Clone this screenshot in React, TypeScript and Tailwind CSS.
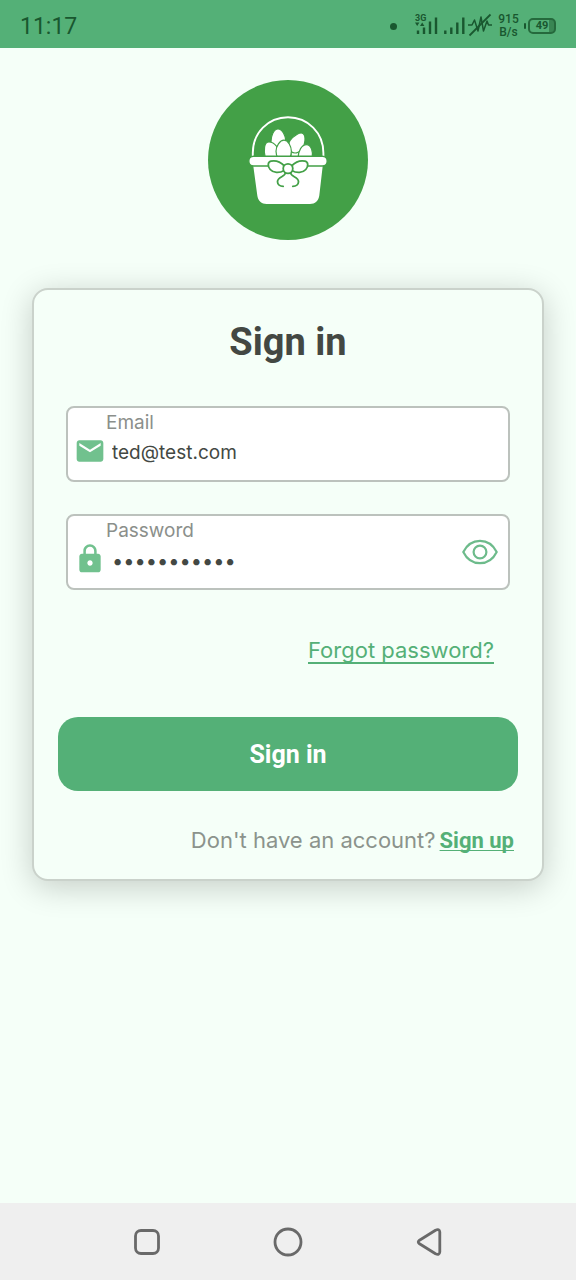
import { useState } from "react";

function StatusBar() {
  return (
    <header className="flex h-12 items-center justify-between bg-[#54b077] px-5 pt-1 font-['Roboto',sans-serif] text-[#19572f]">
      <span className="pt-0.5 text-[23px] leading-7">11:17</span>
      <div className="flex items-center">
        <span className="mr-[18px] size-[7px] rounded-full bg-[#19572f]" />
        <svg width="78" height="28" viewBox="0 0 78 28" fill="none" stroke="currentColor" aria-hidden="true">
          <text x="0" y="8.500" fontSize="9" fontWeight="700" fill="currentColor" stroke="none">3G</text>
          <path fill="currentColor" stroke="none" d="M0 10.500h4.400l-2.200 3.500zM5 14l2.200-3.500L9.400 14z" />
          <path strokeWidth="2.400" d="M3 18.500v3.500M9 15.500V22M15 9.500V22M21 5.500V22" />
          <path strokeWidth="2.400" d="M30.300 18.500V22M36.300 15.500V22M42.300 10.500V22M48.300 5.500V22" />
          <path strokeWidth="1.500" strokeLinejoin="round" d="M53 13h4l2.500-5L63 19l3-14 2.500 14L72 9l1.500 4H77" />
          <path strokeWidth="1.800" d="M54.500 23.500L75.500 2.500" />
        </svg>
        <span className="ml-1 w-[23px] text-center text-xs font-medium leading-[13px]">
          915 <span className="block">B/s</span>
        </span>
        <span className="ml-1 flex items-center gap-0.5">
          <span className="h-[6px] w-[2px] rounded-sm bg-[#19572f]" />
          <span className="flex h-4 w-7 items-center justify-center rounded-[5px] border-2 border-[#25693c] bg-linear-to-r from-[#54b077] from-80% to-[#398653] to-80% text-[11px] font-bold leading-3">
            49
          </span>
        </span>
      </div>
    </header>
  );
}

function BasketLogo() {
  return (
    <svg className="size-40" viewBox="0 0 160 160" role="img" aria-label="Basket">
      <circle cx="80" cy="80" r="80" fill="#43a047" />
      <path d="M44.800 77V73C44.800 53 60 37.200 80 37.200S115.400 53 115.400 73v4" fill="none" stroke="#fff" strokeWidth="1.900" />
      <g fill="#fff" stroke="#43a047" strokeWidth="1.200">
        <path d="M83 70.500h9v7h-9z" />
        <path d="M70 49c4.400 0 7.900 7 7.900 12.500 0 4.500-3 8-7.400 8s-7.500-3.500-7.500-8C63 56 65.500 49 70 49z" />
        <path d="M95 53.500c3.200 2 2.400 11.500-1.100 16-2.800 3.600-7.800 4.500-10.600 2.200s-4-7.500-1.200-11.300C85.600 55.700 92.200 51.500 95 53.500z" />
        <path d="M61 62c5.500 0 10.500 6 11.500 15.500H57.200C55.500 70 56 62 61 62z" />
        <path d="M98.500 64.600c4.800 0 6.800 7.400 5.700 12.900H90.200c0-6.500 3.500-12.900 8.300-12.900z" />
        <path d="M76 60.200c4.200 0 7.400 6.300 7.400 11.100 0 3-.8 5-2 6.700H70c-1.200-1.700-2-3.700-2-6.700 0-4.800 3.800-11.100 8-11.100z" />
      </g>
      <path d="M45.300 86h69.400l-3.400 29.500c-.6 5-4.300 8.500-9.300 8.500H58.600c-5 0-8.700-3.500-9.300-8.500z" fill="#fff" />
      <rect x="40.800" y="76.300" width="78.400" height="9.700" rx="4.800" fill="#fff" stroke="#43a047" strokeWidth="1.400" />
      <g fill="#fff" stroke="#43a047" strokeWidth="1.800" strokeLinecap="round" strokeLinejoin="round">
        <path d="M77.500 92.500c0 4.500-8 4-8 9.200 0 2.800 2.500 4.600 5.700 4.600M82.500 92.500c0 4.500 8 4 8 9.200 0 2.800-2.500 4.600-5.700 4.600" fill="none" />
        <path d="M76.500 86c-4-4-9-5.800-13.500-4.800-3.500.8-3.500 5.200-.8 8.300 3 3.500 9 4 14 1z" />
        <path d="M83.500 86c4-4 9-5.800 13.500-4.800 3.500.8 3.500 5.200.8 8.300-3 3.500-9 4-14 1z" />
        <circle cx="80" cy="88.600" r="4.800" />
      </g>
    </svg>
  );
}

export default function App() {
  const [visible, setVisible] = useState(false);
  const [email, setEmail] = useState("ted@test.com");
  const [password, setPassword] = useState("password123");

  return (
    <div className="flex min-h-screen flex-col bg-[#f5fff8] font-['Inter',sans-serif] text-[#434843]">
      <StatusBar />
      <main className="flex flex-1 flex-col items-center px-8 pb-8 pt-8">
        <BasketLogo />
        <form
          onSubmit={(event) => event.preventDefault()}
          className="mt-12 flex w-full flex-col rounded-2xl border-2 border-[#cad2cb] bg-[#f5fff8] px-6 pb-6 pt-7 shadow-[0_6px_32px_rgba(0,0,0,0.2)]"
        >
          <h1 className="text-center font-['Roboto',sans-serif] text-[38px] font-bold leading-12">Sign in</h1>

          <div className="mx-2 mt-10 flex flex-col gap-8">
            <div className="flex h-19 flex-col rounded-lg border-2 border-[#bcc2bd] bg-white px-1.5 pt-[3px]">
              <label htmlFor="email" className="ml-8 text-[19px] leading-6 text-[#8b8f8b]">
                Email
              </label>
              <div className="flex h-9 items-center gap-1.5">
                <svg className="mb-1 size-8 shrink-0" viewBox="0 0 24 24" fill="#71c18e" aria-hidden="true">
                  <path d="M20 4H4c-1.100 0-1.990.9-1.990 2L2 18c0 1.100.9 2 2 2h16c1.100 0 2-.9 2-2V6c0-1.100-.9-2-2-2zm0 4l-8 5-8-5V6l8 5 8-5v2z" />
                </svg>
                <input
                  id="email"
                  type="email"
                  value={email}
                  onChange={(event) => setEmail(event.target.value)}
                  className="min-w-0 flex-1 bg-transparent text-[19px] leading-6 outline-none"
                />
              </div>
            </div>

            <div className="flex h-19 items-center rounded-lg border-2 border-[#bcc2bd] bg-white pl-1.5 pr-2.5">
              <div className="flex h-full min-w-0 flex-1 flex-col pt-[3px]">
                <label htmlFor="password" className="ml-8 text-[19px] leading-6 text-[#8b8f8b]">
                  Password
                </label>
                <div className="flex h-9 items-center gap-1.5">
                  <svg className="mb-1 size-8 shrink-0" viewBox="0 0 24 24" fill="#71c18e" aria-hidden="true">
                    <path d="M18 8h-1V6c0-2.760-2.240-5-5-5S7 3.240 7 6v2H6c-1.100 0-2 .9-2 2v10c0 1.100.9 2 2 2h12c1.100 0 2-.9 2-2V10c0-1.100-.9-2-2-2zm-6 9c-1.100 0-2-.9-2-2s.9-2 2-2 2 .9 2 2-.9 2-2 2zm3.100-9H8.900V6c0-1.710 1.390-3.100 3.100-3.100s3.100 1.390 3.100 3.100v2z" />
                  </svg>
                  <input
                    id="password"
                    type={visible ? "text" : "password"}
                    value={password}
                    onChange={(event) => setPassword(event.target.value)}
                    className="min-w-0 flex-1 bg-transparent text-xl leading-6 outline-none"
                  />
                </div>
              </div>
              <button
                type="button"
                aria-label="Show password"
                aria-pressed={visible}
                onClick={() => setVisible(!visible)}
              >
                <svg width="36" height="26" viewBox="0 0 36 26" fill="none" stroke="#6dbb8b" strokeWidth="2.200" aria-hidden="true">
                  <path d="M1.300 13C4.500 6.500 10.500 1.800 18 1.800S31.500 6.500 34.700 13C31.500 19.500 25.500 24.200 18 24.200S4.500 19.500 1.300 13z" strokeLinejoin="round" />
                  <circle cx="18" cy="13" r="6.400" />
                </svg>
              </button>
            </div>
          </div>

          <a
            href="#forgot"
            className="mr-6 mt-[46px] self-end text-[22px] leading-7 text-[#54b077] underline decoration-2 underline-offset-4 [text-decoration-skip-ink:none]"
          >
            Forgot password?
          </a>

          <button
            type="submit"
            className="mt-[53px] h-[74px] rounded-[20px] bg-[#54b077] pt-0.5 font-['Roboto',sans-serif] text-[25px] font-bold text-white"
          >
            Sign in
          </button>

          <p className="mr-1 mt-[35px] flex items-baseline justify-end gap-1 text-[22px] leading-7 text-[#8b938c]">
            Don't have an account?
            <a
              href="#signup"
              className="font-['Roboto',sans-serif] font-bold text-[#54b077] underline decoration-1 underline-offset-2 [text-decoration-skip-ink:none]"
            >
              Sign up
            </a>
          </p>
        </form>
      </main>

      <nav aria-label="System" className="flex h-[77px] items-center justify-center gap-28 bg-[#efefef] text-[#696969]">
        <button type="button" aria-label="Recent apps">
          <svg width="30" height="30" viewBox="0 0 30 30" fill="none" stroke="currentColor" strokeWidth="2.800" aria-hidden="true">
            <rect x="4.500" y="3.500" width="23" height="23" rx="5.500" />
          </svg>
        </button>
        <button type="button" aria-label="Home">
          <svg width="30" height="30" viewBox="0 0 30 30" fill="none" stroke="currentColor" strokeWidth="2.800" aria-hidden="true">
            <circle cx="15" cy="15" r="13" />
          </svg>
        </button>
        <button type="button" aria-label="Back">
          <svg width="30" height="30" viewBox="0 0 30 30" fill="none" stroke="currentColor" strokeWidth="2.800" strokeLinejoin="round" aria-hidden="true">
            <path d="M4.500 13.200L20.500 3.200Q24.500 1.500 24.800 5V25Q24.500 28.500 20.500 26.800L4.500 16.800Q2 15 4.500 13.200z" />
          </svg>
        </button>
      </nav>
    </div>
  );
}
